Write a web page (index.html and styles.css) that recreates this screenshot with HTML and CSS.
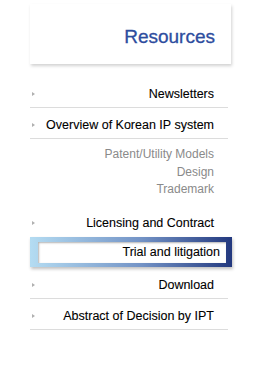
FILE: index.html
```html
<!DOCTYPE html>
<html lang="en">
<head>
    <meta charset="UTF-8">
    <title>Resources</title>
    <link rel="stylesheet" href="styles.css">
</head>
<body>
<div class="side">
    <div class="title">
        <h2>Resources</h2>
    </div>

    <ul class="menu">
        <li class="item"><a href="#">Newsletters</a></li>
        <li class="item"><a href="#">Overview of Korean IP system</a></li>
        <li class="sub">
            <a href="#">Patent/Utility Models</a>
            <a href="#">Design</a>
            <a href="#">Trademark</a>
        </li>
        <li class="item noline"><a href="#">Licensing and Contract</a></li>
        <li class="active"><a href="#">Trial and litigation</a></li>
        <li class="item"><a href="#">Download</a></li>
        <li class="item"><a href="#">Abstract of Decision by IPT</a></li>
    </ul>
</div>
</body>
</html>
```

FILE: styles.css
```css
body {
    margin: 0;
    padding: 4px 0 0 30px;
    font-family: 'Liberation Sans', Arial, sans-serif;
    background: #fff;
}

.side {
    width: 198px;
}

.title {
    width: 201px;
    height: 60px;
    background: #fff;
    box-shadow: 1px 2px 3px rgba(0, 0, 0, 0.18);
    display: flex;
    align-items: center;
    justify-content: flex-end;
    box-sizing: border-box;
    padding: 6px 16px 0 0;
}

.title h2 {
    margin: 0;
    font-size: 19px;
    font-weight: normal;
    color: #2d4d9e;
    -webkit-text-stroke: 0.3px #2d4d9e;
}

.menu {
    list-style: none;
    margin: 13px 0 0 0;
    padding: 0;
    width: 198px;
}

.menu a {
    color: #000;
    text-decoration: none;
    -webkit-text-stroke: 0.1px #000;
}

.item {
    position: relative;
    height: 26px;
    line-height: 26px;
    padding: 4px 14px 0 0;
    border-bottom: 1px solid #dcdcdc;
    text-align: right;
    font-size: 12.5px;
}

.item::before {
    content: "";
    position: absolute;
    left: 2px;
    top: 15px;
    border-left: 3px solid #b0b0b0;
    border-top: 2.5px solid transparent;
    border-bottom: 2.5px solid transparent;
}

.noline {
    border-bottom: none;
}

.sub {
    display: flex;
    flex-direction: column;
    align-items: flex-end;
    padding: 7px 14px 7px 0;
    font-size: 12px;
    line-height: 17.5px;
}

.sub a {
    color: #8a8a8a;
    -webkit-text-stroke: 0;
}

.active {
    width: 202px;
    height: 30px;
    box-sizing: border-box;
    padding: 5px 6px 4px 8px;
    background: linear-gradient(to right, #b4dcf2, #7393c6 55%, #23397f);
    box-shadow: 1px 2px 3px rgba(0, 0, 0, 0.25);
    margin: 1px 0 1px 0;
}

.active a {
    display: block;
    background: #fff;
    box-shadow: inset 1px 1px 2px rgba(0, 0, 0, 0.3);
    text-align: right;
    padding-right: 6px;
    height: 21px;
    line-height: 21px;
    font-size: 12.5px;
}
```
